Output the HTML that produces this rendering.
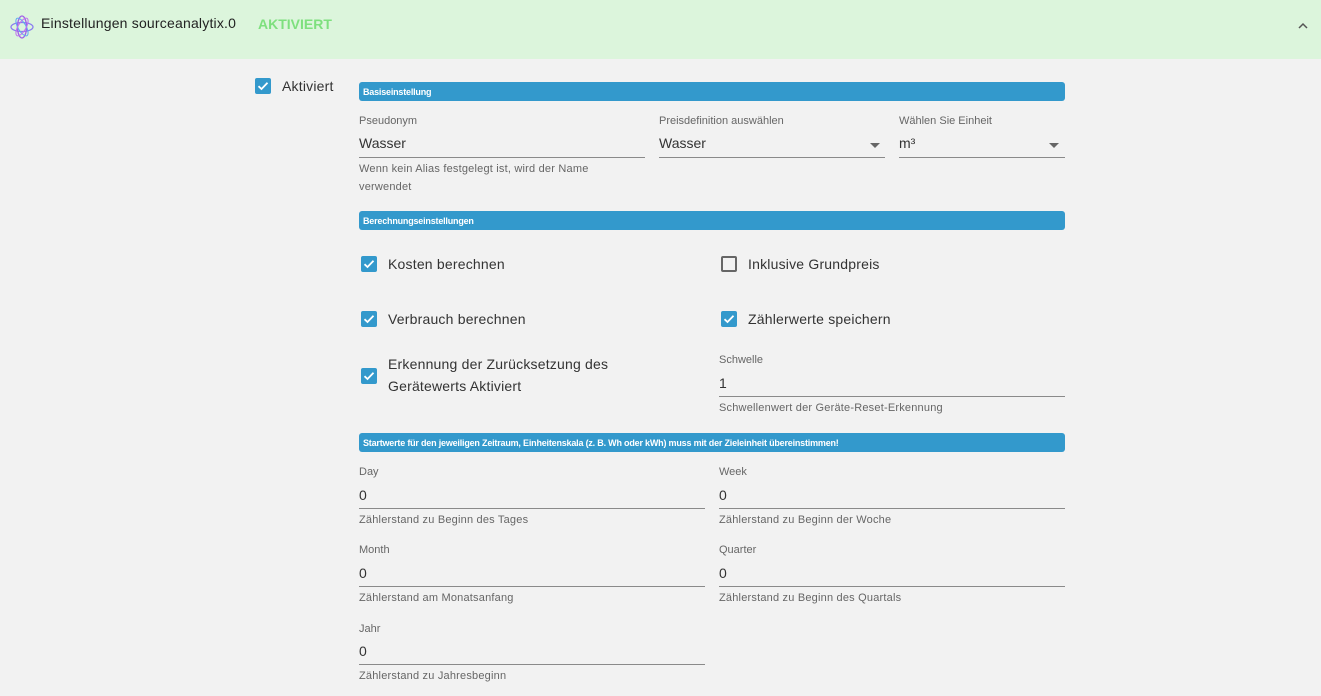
<!DOCTYPE html>
<html><head><meta charset="utf-8"><style>
*{box-sizing:border-box;margin:0;padding:0}
body{width:1321px;height:696px;background:#f2f2f2;font-family:"Liberation Sans",sans-serif;position:relative;overflow:hidden;color:#333}
.hdr{position:absolute;left:0;top:0;width:1321px;height:59px;background:#dcf5dc}
.a{position:absolute;white-space:nowrap}
.bar{position:absolute;left:359px;width:706px;height:19px;background:#3399cc;border-radius:3px;color:#fff;font-size:9px;font-weight:bold;padding:5px 0 0 4px;letter-spacing:-0.2px}
.lbl{font-size:11px;color:#666}
.val{font-size:14px;color:#333}
.hlp{font-size:11px;color:#666;letter-spacing:0.2px}
.ul{position:absolute;height:1px;background:#8a8a8a}
.cb{position:absolute;width:16px;height:16px;background:#3399cc;border-radius:2px}
.cb svg{position:absolute;left:1px;top:1px}
.cbe{position:absolute;width:16px;height:16px;border:2px solid #666;border-radius:2px}
.ct{font-size:14px;color:#333;letter-spacing:0.2px}
.arr{position:absolute;width:0;height:0;border-left:5px solid transparent;border-right:5px solid transparent;border-top:5px solid #666}
</style></head><body>
<div class="hdr"></div>
<svg class="a" style="left:10px;top:14px" width="24" height="26" viewBox="0 0 24 26"><ellipse cx="12" cy="13" rx="11" ry="4.5" fill="none" stroke="#8a7cf0" stroke-width="1.3"/><ellipse cx="12" cy="13" rx="4.5" ry="11" fill="none" stroke="#a060e8" stroke-width="1.3"/><ellipse cx="12" cy="13" rx="10" ry="4" transform="rotate(60 12 13)" fill="none" stroke="#60a8f0" stroke-width="1"/><ellipse cx="12" cy="13" rx="10" ry="4" transform="rotate(-60 12 13)" fill="none" stroke="#c070f0" stroke-width="1"/></svg>
<div class="a" style="left:41px;top:15px;font-size:14px;color:#222;letter-spacing:0.2px">Einstellungen sourceanalytix.0</div>
<div class="a" style="left:258px;top:16px;font-size:14px;font-weight:bold;color:#7ee07e">AKTIVIERT</div>
<svg class="a" style="left:1297px;top:22px" width="12" height="8" viewBox="0 0 12 8"><path d="M2 6 L6 2 L10 6" fill="none" stroke="#555" stroke-width="1.5"/></svg>

<div class="cb" style="left:255px;top:78px"><svg width="14" height="14" viewBox="0 0 14 14"><path d="M2.5 7.2 L5.5 10 L11.5 3.8" fill="none" stroke="#fff" stroke-width="1.8"/></svg></div>
<div class="a ct" style="left:282px;top:78px">Aktiviert</div>

<div class="bar" style="top:82px">Basiseinstellung</div>
<div class="a lbl" style="left:359px;top:115px">Pseudonym</div>
<div class="a val" style="left:359px;top:135px">Wasser</div>
<div class="ul" style="left:359px;top:157px;width:286px"></div>
<div class="a hlp" style="left:359px;top:160px;line-height:18px;white-space:normal;width:260px">Wenn kein Alias festgelegt ist, wird der Name verwendet</div>
<div class="a lbl" style="left:659px;top:115px">Preisdefinition auswählen</div>
<div class="a val" style="left:659px;top:135px">Wasser</div>
<div class="arr" style="left:870px;top:143px"></div>
<div class="ul" style="left:659px;top:157px;width:226px"></div>
<div class="a lbl" style="left:899px;top:115px">Wählen Sie Einheit</div>
<div class="a val" style="left:899px;top:135px">m³</div>
<div class="arr" style="left:1049px;top:143px"></div>
<div class="ul" style="left:899px;top:157px;width:166px"></div>

<div class="bar" style="top:211px">Berechnungseinstellungen</div>
<div class="cb" style="left:361px;top:256px"><svg width="14" height="14" viewBox="0 0 14 14"><path d="M2.5 7.2 L5.5 10 L11.5 3.8" fill="none" stroke="#fff" stroke-width="1.8"/></svg></div>
<div class="a ct" style="left:388px;top:256px">Kosten berechnen</div>
<div class="cbe" style="left:721px;top:256px"></div>
<div class="a ct" style="left:748px;top:256px">Inklusive Grundpreis</div>
<div class="cb" style="left:361px;top:311px"><svg width="14" height="14" viewBox="0 0 14 14"><path d="M2.5 7.2 L5.5 10 L11.5 3.8" fill="none" stroke="#fff" stroke-width="1.8"/></svg></div>
<div class="a ct" style="left:388px;top:311px">Verbrauch berechnen</div>
<div class="cb" style="left:721px;top:311px"><svg width="14" height="14" viewBox="0 0 14 14"><path d="M2.5 7.2 L5.5 10 L11.5 3.8" fill="none" stroke="#fff" stroke-width="1.8"/></svg></div>
<div class="a ct" style="left:748px;top:311px">Zählerwerte speichern</div>
<div class="cb" style="left:361px;top:368px"><svg width="14" height="14" viewBox="0 0 14 14"><path d="M2.5 7.2 L5.5 10 L11.5 3.8" fill="none" stroke="#fff" stroke-width="1.8"/></svg></div>
<div class="a ct" style="left:388px;top:353px;line-height:22px">Erkennung der Zurücksetzung des<br>Gerätewerts Aktiviert</div>
<div class="a lbl" style="left:719px;top:354px">Schwelle</div>
<div class="a val" style="left:719px;top:375px">1</div>
<div class="ul" style="left:719px;top:396px;width:346px"></div>
<div class="a hlp" style="left:719px;top:402px">Schwellenwert der Geräte-Reset-Erkennung</div>

<div class="bar" style="top:433px">Startwerte für den jeweiligen Zeitraum, Einheitenskala (z. B. Wh oder kWh) muss mit der Zieleinheit übereinstimmen!</div>

<div class="a lbl" style="left:359px;top:466px">Day</div>
<div class="a val" style="left:359px;top:487px">0</div>
<div class="ul" style="left:359px;top:508px;width:346px"></div>
<div class="a hlp" style="left:359px;top:514px">Zählerstand zu Beginn des Tages</div>
<div class="a lbl" style="left:719px;top:466px">Week</div>
<div class="a val" style="left:719px;top:487px">0</div>
<div class="ul" style="left:719px;top:508px;width:346px"></div>
<div class="a hlp" style="left:719px;top:514px">Zählerstand zu Beginn der Woche</div>

<div class="a lbl" style="left:359px;top:544px">Month</div>
<div class="a val" style="left:359px;top:565px">0</div>
<div class="ul" style="left:359px;top:586px;width:346px"></div>
<div class="a hlp" style="left:359px;top:592px">Zählerstand am Monatsanfang</div>
<div class="a lbl" style="left:719px;top:544px">Quarter</div>
<div class="a val" style="left:719px;top:565px">0</div>
<div class="ul" style="left:719px;top:586px;width:346px"></div>
<div class="a hlp" style="left:719px;top:592px">Zählerstand zu Beginn des Quartals</div>

<div class="a lbl" style="left:359px;top:623px">Jahr</div>
<div class="a val" style="left:359px;top:643px">0</div>
<div class="ul" style="left:359px;top:664px;width:346px"></div>
<div class="a hlp" style="left:359px;top:670px">Zählerstand zu Jahresbeginn</div>
</body></html>
